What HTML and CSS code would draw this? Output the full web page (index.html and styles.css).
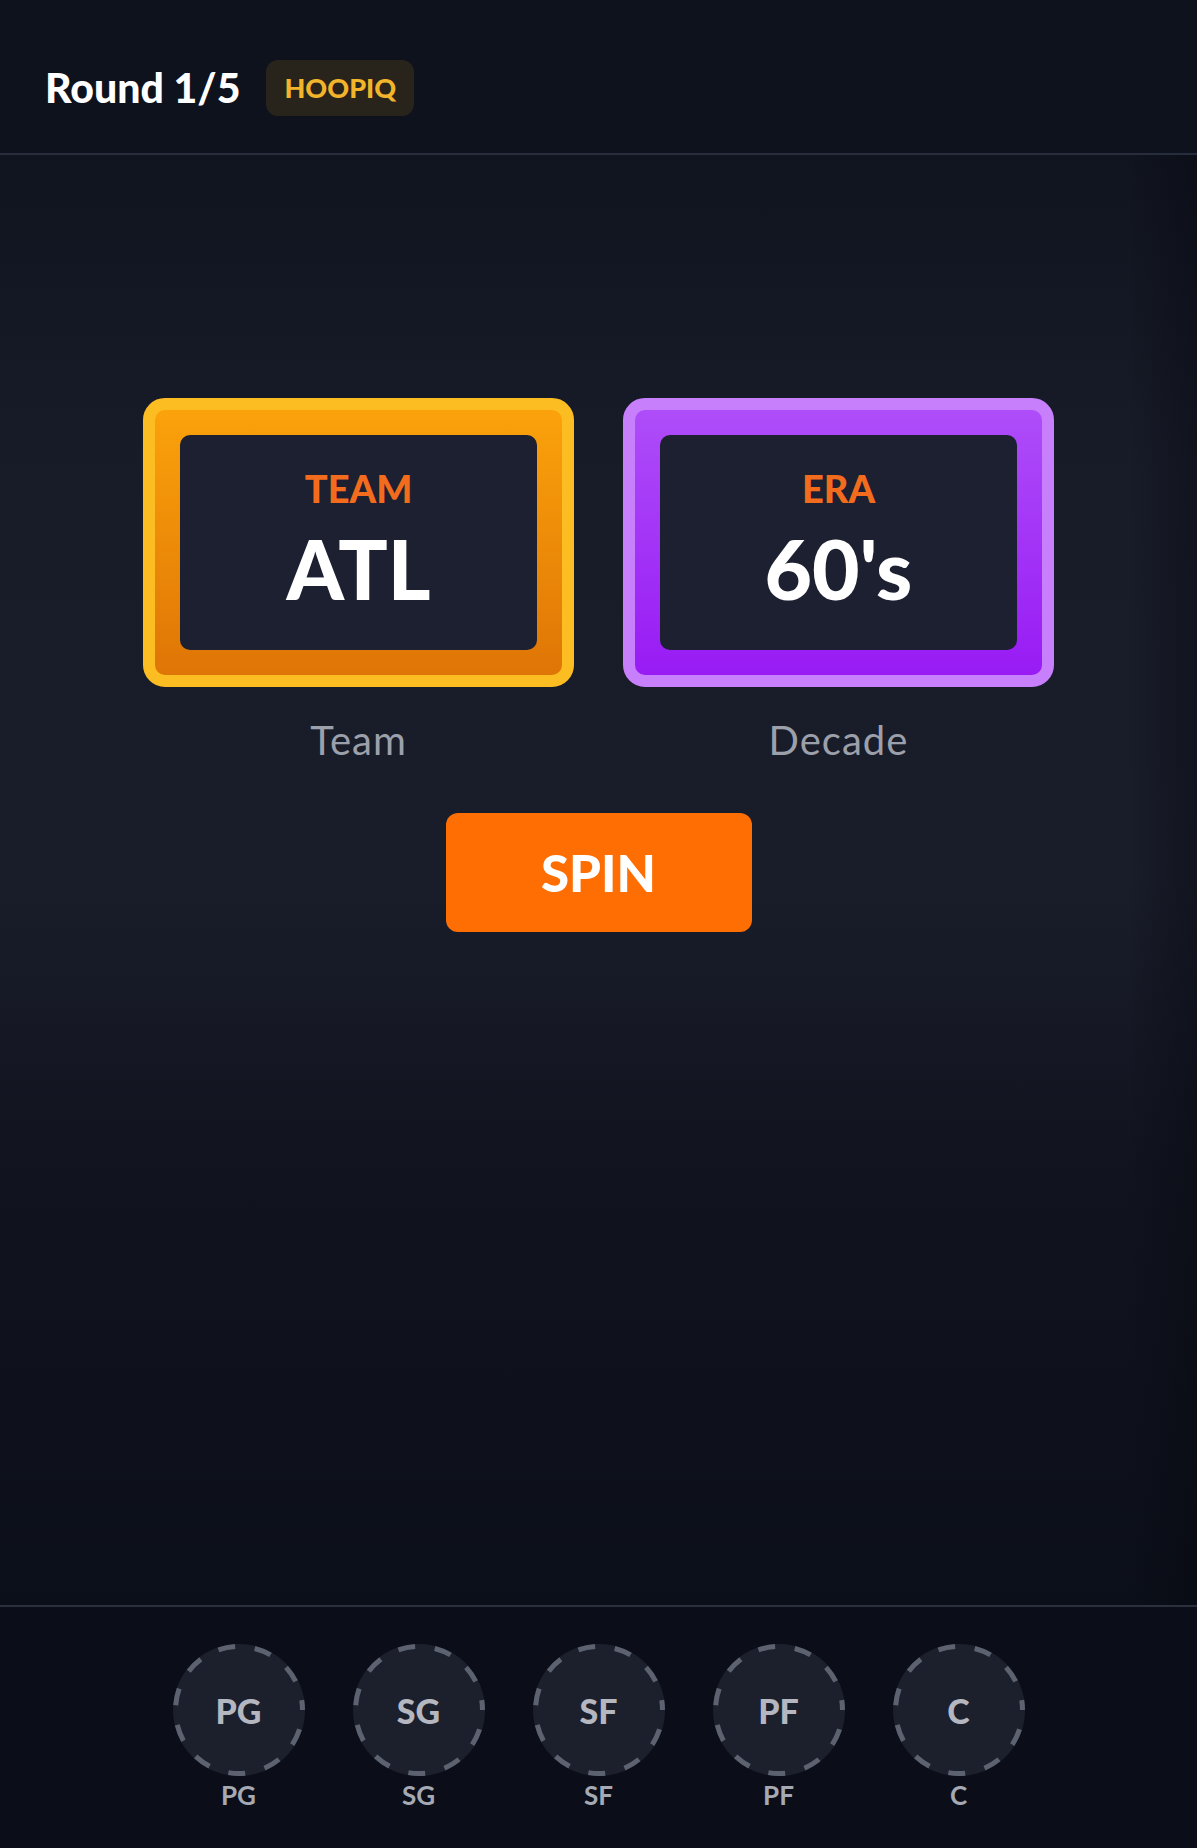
FILE: index.html
```html
<!DOCTYPE html>
<html lang="en">
<head>
    <meta charset="UTF-8">
    <meta name="viewport" content="width=device-width, initial-scale=1.0">
    <title>HoopIQ - Round 1/5</title>
    <link rel="stylesheet" href="styles.css">
</head>
<body>
    <header class="topbar">
        <span class="round">Round 1/5</span>
        <span class="brand">HOOPIQ</span>
    </header>

    <main class="stage">
        <div class="reels">
            <div class="reel reel-team">
                <div class="reel-frame">
                    <div class="reel-window">
                        <span class="reel-kind">TEAM</span>
                        <span class="reel-value">ATL</span>
                    </div>
                </div>
                <div class="reel-caption">Team</div>
            </div>

            <div class="reel reel-era">
                <div class="reel-frame">
                    <div class="reel-window">
                        <span class="reel-kind">ERA</span>
                        <span class="reel-value">60's</span>
                    </div>
                </div>
                <div class="reel-caption">Decade</div>
            </div>
        </div>

        <button class="spin" type="button">SPIN</button>
    </main>

    <!-- empty roster slots -->
    <footer class="lineup">
        <div class="pos">
            <div class="pos-ring">
                <svg viewBox="0 0 132 132" width="132" height="132"><circle class="ring-fill" cx="66" cy="66" r="66"/><circle class="ring-dash" cx="66" cy="66" r="63.5"/></svg>
                <span>PG</span>
            </div>
            <div class="pos-name">PG</div>
        </div>
        <div class="pos">
            <div class="pos-ring">
                <svg viewBox="0 0 132 132" width="132" height="132"><circle class="ring-fill" cx="66" cy="66" r="66"/><circle class="ring-dash" cx="66" cy="66" r="63.5"/></svg>
                <span>SG</span>
            </div>
            <div class="pos-name">SG</div>
        </div>
        <div class="pos">
            <div class="pos-ring">
                <svg viewBox="0 0 132 132" width="132" height="132"><circle class="ring-fill" cx="66" cy="66" r="66"/><circle class="ring-dash" cx="66" cy="66" r="63.5"/></svg>
                <span>SF</span>
            </div>
            <div class="pos-name">SF</div>
        </div>
        <div class="pos">
            <div class="pos-ring">
                <svg viewBox="0 0 132 132" width="132" height="132"><circle class="ring-fill" cx="66" cy="66" r="66"/><circle class="ring-dash" cx="66" cy="66" r="63.5"/></svg>
                <span>PF</span>
            </div>
            <div class="pos-name">PF</div>
        </div>
        <div class="pos">
            <div class="pos-ring">
                <svg viewBox="0 0 132 132" width="132" height="132"><circle class="ring-fill" cx="66" cy="66" r="66"/><circle class="ring-dash" cx="66" cy="66" r="63.5"/></svg>
                <span>C</span>
            </div>
            <div class="pos-name">C</div>
        </div>
    </footer>
</body>
</html>
```

FILE: styles.css
```css
* {
    box-sizing: border-box;
}
html, body {
    margin: 0;
    height: 100%;
}
body {
    font-family: Lato, 'Open Sans', sans-serif;
    color: #fff;
    background: #0b0e18;
    display: flex;
    flex-direction: column;
    min-height: 100vh;
}

/* top bar */
.topbar {
    height: 155px;
    padding: 22px 0 0 45px;
    display: flex;
    align-items: center;
    gap: 26px;
    background: #0e121d;
    border-bottom: 2px solid #272d3d;
}
.round {
    font-size: 41px;
    font-weight: 900;
    line-height: 1;
}
.brand {
    height: 56px;
    padding: 0 18px;
    display: flex;
    align-items: center;
    background: #28241b;
    border-radius: 12px;
    color: #f2b42a;
    font-size: 27px;
    font-weight: 900;
}

/* slot machine */
.stage {
    flex: 1;
    padding-top: 243px;
    display: flex;
    flex-direction: column;
    align-items: center;
    background:
        linear-gradient(to left, rgba(4, 6, 11, 0.35), rgba(4, 6, 11, 0) 70px),
        linear-gradient(180deg, #10141f 0%, #181c29 22%, #191d2a 50%, #11141f 70%, #0b0f19 100%);
}
.reels {
    display: flex;
    gap: 49px;
}
.reel {
    width: 431px;
    display: flex;
    flex-direction: column;
    align-items: center;
}
.reel-frame {
    width: 100%;
    padding: 25px;
    border: 12px solid;
    border-radius: 22px;
}
.reel-team .reel-frame {
    border-color: #fbbd22;
    background: linear-gradient(180deg, #fba20b, #df7506);
}
.reel-era .reel-frame {
    border-color: #c77ffb;
    background: linear-gradient(180deg, #ae4df9, #981bf4);
}
.reel-window {
    height: 215px;
    padding-bottom: 8px;
    display: flex;
    flex-direction: column;
    align-items: center;
    justify-content: center;
    background: #1c2030;
    border-radius: 10px;
}
.reel-kind {
    font-size: 38px;
    font-weight: 900;
    line-height: 1;
    color: #f36c1e;
    margin-bottom: 20px;
}
.reel-value {
    font-size: 82px;
    font-weight: 900;
    line-height: 1;
}
.reel-caption {
    margin-top: 33px;
    font-size: 40px;
    line-height: 1;
    letter-spacing: 1px;
    color: #9ca0ab;
}
.spin {
    margin-top: 53px;
    width: 306px;
    height: 119px;
    border: none;
    border-radius: 12px;
    background: #ff6e02;
    color: #fff;
    font-family: Lato, 'Open Sans', sans-serif;
    font-size: 51px;
    font-weight: 900;
    cursor: pointer;
}

/* roster */
.lineup {
    height: 243px;
    padding-top: 37px;
    display: flex;
    justify-content: center;
    gap: 48px;
    background: #0b0e18;
    border-top: 2px solid #2b303e;
}
.pos {
    display: flex;
    flex-direction: column;
    align-items: center;
}
.pos-ring {
    width: 132px;
    height: 132px;
    display: grid;
    place-items: center;
}
.pos-ring > * {
    grid-area: 1 / 1;
}
.pos-ring svg {
    display: block;
}
.ring-fill {
    fill: #1c202d;
}
.ring-dash {
    fill: none;
    stroke: #5d6270;
    stroke-width: 5;
    stroke-dasharray: 17 19.9;
    stroke-dashoffset: 17.4;
}
.pos-ring span {
    font-size: 34px;
    font-weight: 900;
    color: #b4b7c0;
}
.pos-name {
    margin-top: 6px;
    font-size: 26px;
    font-weight: 700;
    line-height: 1;
    color: #a5a9b3;
}
```
